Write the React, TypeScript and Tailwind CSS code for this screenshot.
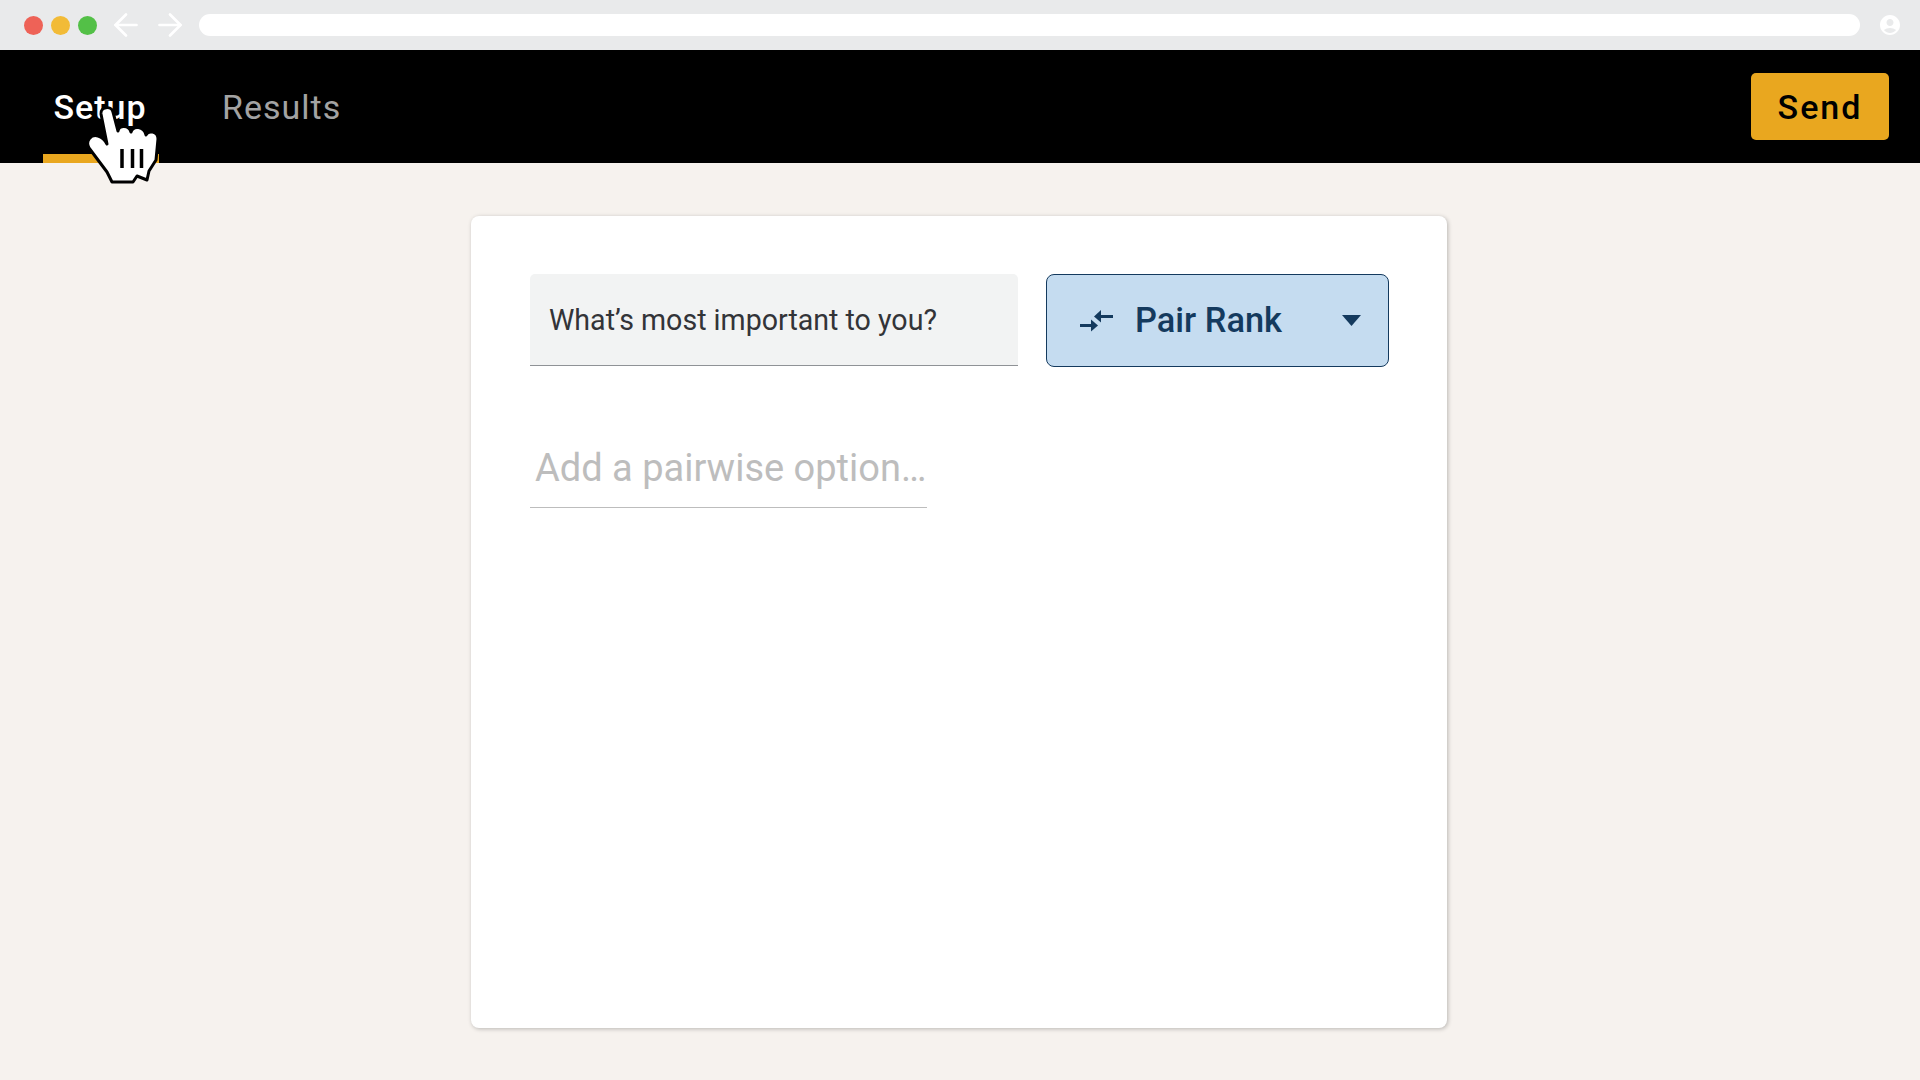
import { ArrowLeft, ArrowRight } from "lucide-react";
import { MdAccountCircle } from "react-icons/md";

function PairIcon() {
  return (
    <svg viewBox="0 0 34 24" className="h-6 w-[34px]" fill="#143a5e">
      <rect x="1" y="15" width="13" height="3" />
      <path d="M12 10.5 L19 16.5 L12 22.5 Z" />
      <rect x="20" y="6" width="14" height="3" />
      <path d="M22 1 L15 7.5 L22 13.5 Z" />
    </svg>
  );
}

function HandCursor() {
  return (
    <svg
      viewBox="60 90 120 100"
      className="pointer-events-none absolute left-[60px] top-[90px] h-[100px] w-[120px]"
    >
      <path
        d="M101 114 C100 107 111 105 113 112 L118 131 C119 125 129 125 131 132 C133 125 144 126 146 135 C148 130 158 131 158 139 L156 160 L149 171 L147 180 L137 176 L133 182 L112 182 L107 172 L89 148 C85 141 91 134 98 136 C102 137 105 140 107 144 Z"
        fill="#fff"
        stroke="#000"
        strokeWidth="3"
        strokeLinejoin="round"
      />
      <path d="M122 149 V168 M132.5 149 V168 M141.5 149 V168" stroke="#000" strokeWidth="3.5" fill="none" />
    </svg>
  );
}

export default function App() {
  return (
    <div className="relative flex min-h-[1080px] flex-col bg-[#f6f2ee] font-['Roboto',sans-serif]">
      <div className="flex h-[50px] items-center bg-[#e9eaeb] pl-[24px] pr-[18px]">
        <div className="flex gap-2">
          <span className="h-[19px] w-[19px] rounded-full bg-[#ee6257]" />
          <span className="h-[19px] w-[19px] rounded-full bg-[#f2bb37]" />
          <span className="h-[19px] w-[19px] rounded-full bg-[#53c047]" />
        </div>
        <ArrowLeft className="ml-[11px] h-9 w-9 text-white" strokeWidth={1.8} />
        <ArrowRight className="ml-2 h-9 w-9 text-white" strokeWidth={1.8} />
        <div className="ml-[11px] h-[22px] flex-1 rounded-full bg-white" />
        <MdAccountCircle className="ml-[18px] h-6 w-6 text-white" />
      </div>

      <header className="flex h-[113px] items-stretch bg-black pl-[43px] pr-[31px]">
        <div className="flex h-full w-[116px] items-center justify-center border-b-[9px] border-[#e9a71f] pr-[2px] pt-[10px] text-[34px] font-medium tracking-[1px] text-white">
          Setup
        </div>
        <div className="ml-[63px] flex items-center pt-[1px] text-[34px] tracking-[1px] text-[#a3a3a3]">
          Results
        </div>
        <button className="my-auto ml-auto flex h-[67px] w-[138px] items-center justify-center rounded-[5px] bg-[#e9a71f] pt-[1px] text-[34px] font-medium tracking-[2px] text-black">
          Send
        </button>
      </header>

      <main className="flex justify-center pr-[2px] pt-[53px]">
        <div className="h-[812px] w-[976px] rounded-lg bg-white pl-[59px] pr-[58px] pt-[58px] shadow-[1px_1px_4px_rgba(0,0,0,0.25)]">
          <div className="flex items-start gap-[28px]">
            <div className="flex h-[92px] w-[488px] items-center rounded-t-[5px] border-b border-[#8f9296] bg-[#f2f3f3] pl-[19px] pt-[2px] text-[28.6px] text-[#333438]">
              What’s most important to you?
            </div>
            <button className="flex h-[93px] w-[343px] items-center rounded-[8px] border border-[#143a5e] bg-[#c5dcf0] pl-[32px] pr-[27px] text-[34.4px] font-medium text-[#143a5e]">
              <PairIcon />
              <span className="ml-[22px]">Pair Rank</span>
              <svg viewBox="0 0 19 11" className="ml-auto h-[11px] w-[19px]" fill="#143a5e">
                <path d="M0 0 H19 L9.5 11 Z" />
              </svg>
            </button>
          </div>
          <div className="mt-[78px] w-[397px] whitespace-nowrap border-b border-[#bdbdbd] pb-[16px] pl-[5px] text-[38px] leading-[46px] text-[#bdbdbd]">
            Add a pairwise option…
          </div>
        </div>
      </main>

      <HandCursor />
    </div>
  );
}
